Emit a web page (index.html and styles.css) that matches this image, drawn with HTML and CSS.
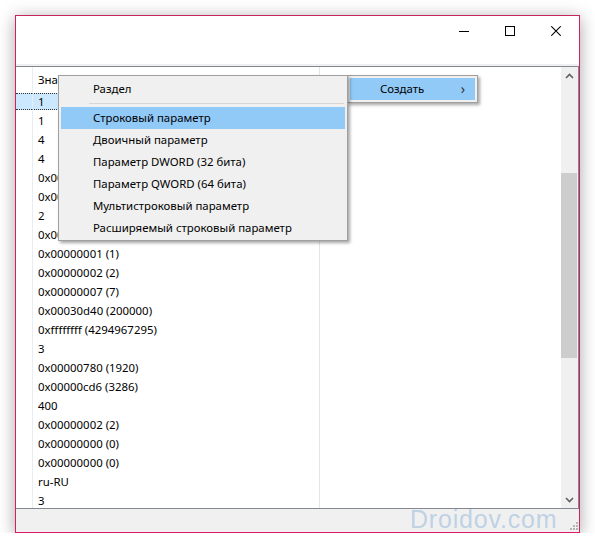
FILE: index.html
```
<!DOCTYPE html>
<html lang="ru">
<head>
<meta charset="utf-8">
<title>Редактор реестра</title>
<link rel="stylesheet" href="styles.css">
</head>
<body>
<div class="window">
  <div class="titlebar">
    <div class="tb-btn"><svg width="10" height="10" viewBox="0 0 10 10"><line x1="0" y1="5.5" x2="10" y2="5.5" stroke="#000" stroke-width="1"/></svg></div>
    <div class="tb-btn"><svg width="10" height="10" viewBox="0 0 10 10"><rect x="0.5" y="0.5" width="9" height="9" fill="none" stroke="#000" stroke-width="1"/></svg></div>
    <div class="tb-btn"><svg width="10" height="10" viewBox="0 0 10 10"><path d="M0.3 0.3 L9.7 9.7 M9.7 0.3 L0.3 9.7" stroke="#000" stroke-width="1.05"/></svg></div>
  </div>
  <div class="menustrip"></div>
  <div class="content">
    <div class="list">
      <div class="row header"><div class="c0"></div><div class="c1">Значение</div><div class="c2"></div></div>
      <div class="row selected"><div class="c0"></div><div class="c1">1</div><div class="c2"></div></div>
      <div class="row"><div class="c0"></div><div class="c1">1</div><div class="c2"></div></div>
      <div class="row"><div class="c0"></div><div class="c1">4</div><div class="c2"></div></div>
      <div class="row"><div class="c0"></div><div class="c1">4</div><div class="c2"></div></div>
      <div class="row"><div class="c0"></div><div class="c1">0x00000000 (0)</div><div class="c2"></div></div>
      <div class="row"><div class="c0"></div><div class="c1">0x00000001 (1)</div><div class="c2"></div></div>
      <div class="row"><div class="c0"></div><div class="c1">2</div><div class="c2"></div></div>
      <div class="row"><div class="c0"></div><div class="c1">0x00000000 (0)</div><div class="c2"></div></div>
      <div class="row"><div class="c0"></div><div class="c1">0x00000001 (1)</div><div class="c2"></div></div>
      <div class="row"><div class="c0"></div><div class="c1">0x00000002 (2)</div><div class="c2"></div></div>
      <div class="row"><div class="c0"></div><div class="c1">0x00000007 (7)</div><div class="c2"></div></div>
      <div class="row"><div class="c0"></div><div class="c1">0x00030d40 (200000)</div><div class="c2"></div></div>
      <div class="row"><div class="c0"></div><div class="c1">0xffffffff (4294967295)</div><div class="c2"></div></div>
      <div class="row"><div class="c0"></div><div class="c1">3</div><div class="c2"></div></div>
      <div class="row"><div class="c0"></div><div class="c1">0x00000780 (1920)</div><div class="c2"></div></div>
      <div class="row"><div class="c0"></div><div class="c1">0x00000cd6 (3286)</div><div class="c2"></div></div>
      <div class="row"><div class="c0"></div><div class="c1">400</div><div class="c2"></div></div>
      <div class="row"><div class="c0"></div><div class="c1">0x00000002 (2)</div><div class="c2"></div></div>
      <div class="row"><div class="c0"></div><div class="c1">0x00000000 (0)</div><div class="c2"></div></div>
      <div class="row"><div class="c0"></div><div class="c1">0x00000000 (0)</div><div class="c2"></div></div>
      <div class="row"><div class="c0"></div><div class="c1">ru-RU</div><div class="c2"></div></div>
      <div class="row"><div class="c0"></div><div class="c1">3</div><div class="c2"></div></div>
    </div>
    <div class="scrollbar">
      <div class="sb-arrow"><svg width="9" height="6" viewBox="0 0 9 6"><polyline points="1,5 4.5,1.5 8,5" fill="none" stroke="#606060" stroke-width="1.6"/></svg></div>
      <div class="sb-track"><div class="sb-thumb"></div></div>
      <div class="sb-arrow"><svg width="9" height="6" viewBox="0 0 9 6"><polyline points="1,1 4.5,4.5 8,1" fill="none" stroke="#606060" stroke-width="1.6"/></svg></div>
    </div>
  </div>
  <div class="statusbar">
    <svg class="grip" width="8" height="8" viewBox="0 0 8 8" fill="#b4b4b4">
      <rect x="6" y="0" width="2" height="2"/>
      <rect x="3" y="3" width="2" height="2"/><rect x="6" y="3" width="2" height="2"/>
      <rect x="0" y="6" width="2" height="2"/><rect x="3" y="6" width="2" height="2"/><rect x="6" y="6" width="2" height="2"/>
    </svg>
  </div>

  <div class="menu parent">
    <div class="item hl"><span class="label">Создать</span><span class="arrow">&#x203A;</span></div>
  </div>
  <div class="menu sub">
    <div class="item">Раздел</div>
    <div class="sep"></div>
    <div class="item hl">Строковый параметр</div>
    <div class="item">Двоичный параметр</div>
    <div class="item">Параметр DWORD (32 бита)</div>
    <div class="item">Параметр QWORD (64 бита)</div>
    <div class="item">Мультистроковый параметр</div>
    <div class="item">Расширяемый строковый параметр</div>
  </div>
  <div class="watermark">Droidov.com</div>
</div>
</body>
</html>
```
FILE: styles.css
```
* { box-sizing: border-box; }
html, body { margin: 0; padding: 0; background: #fff; }
body {
  font-family: "Segoe UI", "Noto Sans", "Liberation Sans", sans-serif;
  font-size: 11.4px;
  color: #000;
}
.window {
  position: relative;
  margin: 15px 0 0 15px;
  width: 565px;
  height: 518px;
  border: 1px solid #c8245f;
  border-bottom-color: #e0176a;
  background: #fff;
  box-shadow: 0 3px 16px rgba(0,0,0,0.35);
  display: flex;
  flex-direction: column;
}
.titlebar {
  height: 48px;
  display: flex;
  justify-content: flex-end;
  align-items: flex-start;
  background: #fff;
}
.tb-btn {
  width: 46px;
  height: 29px;
  display: flex;
  align-items: center;
  justify-content: center;
}
.tb-btn svg { display: block; }
.menustrip { height: 2px; background: #f0f0f0; }
.content {
  height: 443px;
  border-top: 1px solid #828790;
  border-bottom: 1px solid #828790;
  border-right: 1px solid #828790;
  display: flex;
  background: #fff;
}
.list {
  flex: 1;
  overflow: hidden;
}
.row {
  display: grid;
  grid-template-columns: 16px 287px 1fr;
  height: 19px;
  line-height: 19px;
}
.row.header { height: 25px; line-height: 25px; }
.c1 {
  border-left: 1px solid #e6edf5;
  padding-left: 5px;
  white-space: nowrap;
  overflow: hidden;
}
.c2 { border-left: 1px solid #e5e5e5; }
.row.selected .c0, .row.selected .c1 {
  background: #cce8ff;
  border-top: 1px dotted #333;
  border-bottom: 1px dotted #333;
  margin: 1px 0 1px;
  line-height: 15px;
}
.scrollbar {
  width: 17px;
  background: #f0f0f0;
  display: flex;
  flex-direction: column;
}
.sb-arrow {
  height: 17px;
  display: flex;
  align-items: center;
  justify-content: center;
}
.sb-arrow svg { display: block; }
.sb-track { flex: 1; }
.sb-thumb {
  margin: 89px 1px 0 0;
  height: 185px;
  background: #cdcdcd;
}
.statusbar {
  flex: 1;
  background: #f0f0f0;
  display: flex;
  justify-content: flex-end;
  align-items: flex-end;
  padding: 0 1px 2px 0;
}
.grip { display: block; }

.menu {
  position: absolute;
  background: #f0f0f0;
  border: 1px solid #a0a0a0;
  box-shadow: 2px 2px 3px rgba(0,0,0,0.35);
  padding: 2px 2px 1px 2px;
}
.menu .item {
  height: 22px;
  line-height: 21px;
  padding-left: 32px;
  white-space: nowrap;
}
.menu .item.hl { background: #91c9f7; }
.menu .sep {
  height: 1px;
  background: #d7d7d7;
  margin: 3px 1px 3px 28px;
}
.menu.sub {
  left: 42px;
  top: 59px;
  width: 290px;
  z-index: 2;
}
.menu.parent {
  left: 331px;
  top: 59px;
  width: 131px;
  z-index: 1;
  padding: 2px;
}
.menu.parent .item {
  display: flex;
  padding-left: 30px;
  padding-right: 10px;
}
.menu.parent .label { flex: 1; }
.menu.parent .arrow { font-size: 14px; color: #333; }
.watermark {
  position: absolute;
  left: 394px;
  top: 491px;
  font-family: "Liberation Sans", Arial, sans-serif;
  font-size: 25px;
  line-height: 25px;
  letter-spacing: 0.8px;
  color: rgba(110, 160, 210, 0.4);
  z-index: 3;
}
```
